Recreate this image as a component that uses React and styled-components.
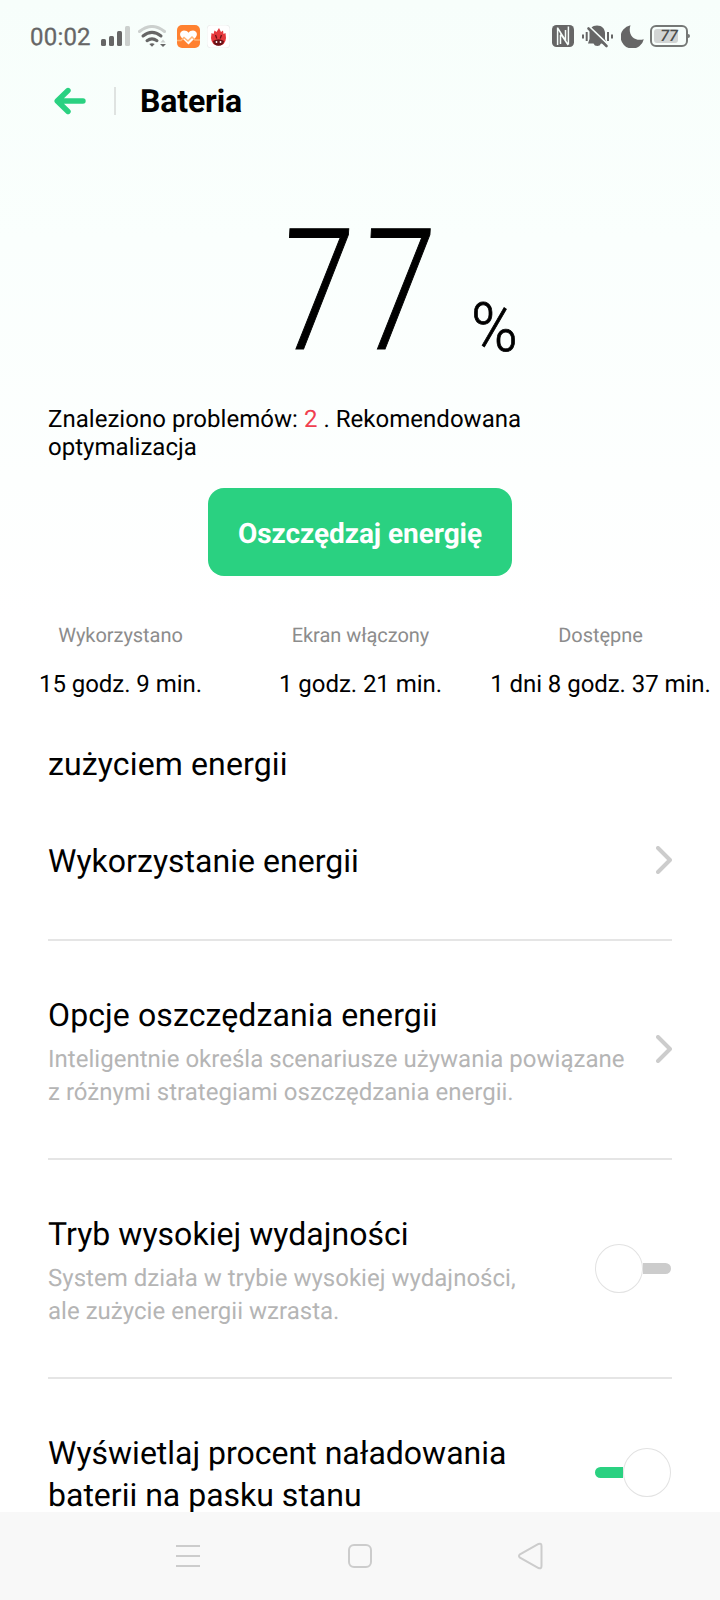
import React from "react";
import styled, { createGlobalStyle } from "styled-components";

const Global = createGlobalStyle`
  * { box-sizing: border-box; }
  html, body { margin: 0; padding: 0; background: #fff; }
  body {
    overflow: hidden;
    font-family: Roboto, "Noto Sans", sans-serif;
    color: #000;
    text-rendering: geometricPrecision;
  }
  svg { display: block; flex: none; }
`;

const Screen = styled.div`
  width: 720px;
  height: 1600px;
  display: flex;
  flex-direction: column;
  overflow: hidden;
  background: linear-gradient(#f7fefb 0, #fafffd 240px, #fdfffe 480px, #ffffff 620px);
`;

const StatusBar = styled.div`
  flex: none;
  height: 72px;
  padding: 0 30px;
  display: flex;
  align-items: center;
  justify-content: space-between;
  color: #666;
`;

const StatusGroup = styled.div`
  display: flex;
  align-items: center;
  gap: ${(p) => p.$gap}px;
`;

const Clock = styled.span`
  width: 63px;
  padding-top: 1px;
  font-size: 24px;
  line-height: 28px;
  letter-spacing: 0.2px;
  -webkit-text-stroke: 0.3px #666;
  white-space: nowrap;
`;

const AppIcons = styled.span`
  display: flex;
  gap: 7px;
  margin-left: 3px;
`;

const BatteryPill = styled.span`
  position: relative;
  width: 38px;
  height: 22px;
  margin: 0 2px 0 -2px;
  padding: 2px 7px 2px 2px;
  border: 2px solid #757876;
  border-radius: 6px;
  display: flex;
  &::before {
    content: "";
    width: 24px;
    height: 14px;
    border-radius: 3px;
    background: #d2d5d4;
  }
  &::after {
    content: "";
    position: absolute;
    right: -4px;
    top: 7px;
    width: 2px;
    height: 4px;
    border-radius: 0 2px 2px 0;
    background: #757876;
  }
`;

const BatteryValue = styled.b`
  position: absolute;
  inset: 0 0 0 0;
  text-align: center;
  font: italic 500 16px/18px Roboto, sans-serif;
  color: #4c4e4d;
`;

const Header = styled.header`
  flex: none;
  height: 58px;
  padding-left: 53px;
  display: flex;
  align-items: center;
`;

const HeaderRule = styled.span`
  width: 2px;
  height: 28px;
  margin: 0 24px 0 28px;
  background: #dfe3e1;
`;

const Title = styled.h1`
  margin: 0;
  font-size: 32px;
  line-height: 38px;
  font-weight: 700;
  letter-spacing: -0.15px;
`;

const Level = styled.div`
  flex: none;
  height: 270px;
  padding: 82px 0 0 277px;
  display: flex;
`;

const LevelNumber = styled.span`
  flex: none;
  width: 194px;
  height: 160px;
  font-size: 169px;
  line-height: 160px;
  font-weight: 300;
  letter-spacing: 15.5px;
  -webkit-text-stroke: 1.2px #000;
  transform: skewX(-3.3deg) scaleX(0.745);
  transform-origin: 0 100%;
`;

const LevelUnit = styled.span`
  font-size: 68px;
  line-height: 80px;
  font-weight: 300;
  margin-top: 76px;
  -webkit-text-stroke: 0.8px #000;
  transform: scaleX(0.93);
  transform-origin: 0 0;
`;

const Problems = styled.div`
  flex: none;
  height: 88px;
  padding: 5px 0 0 48px;
  font-size: 24px;
  line-height: 28px;
  letter-spacing: 0.03px;
`;

const ProblemLine = styled.div`
  display: flex;
  white-space: pre;
`;

const Count = styled.span`
  color: #f04050;
`;

const SaveButton = styled.button`
  flex: none;
  align-self: center;
  width: 304px;
  height: 88px;
  margin: 0;
  padding: 4px 0 0;
  border: 0;
  border-radius: 16px;
  background: #2ad181;
  color: #fff;
  font: 700 28px/34px Roboto, sans-serif;
  letter-spacing: -0.06px;
  text-rendering: inherit;
`;

const Stats = styled.div`
  flex: none;
  height: 156px;
  padding-top: 47px;
  display: grid;
  grid-template-columns: repeat(3, 240px);
`;

const Stat = styled.div`
  display: flex;
  flex-direction: column;
  align-items: center;
  padding-left: 1px;
  letter-spacing: -0.05px;
  white-space: nowrap;
`;

const StatLabel = styled.span`
  font-size: 20px;
  line-height: 24px;
  color: #8c8c8c;
`;

const StatValue = styled.span`
  margin-top: 22px;
  font-size: 24px;
  line-height: 30px;
`;

const SectionTitle = styled.h2`
  flex: none;
  height: 49px;
  margin: 0;
  padding: 13px 48px 0;
  font-size: 32px;
  line-height: 38px;
  font-weight: 400;
  letter-spacing: 0.13px;
`;

const List = styled.div`
  flex: 1;
  min-height: 0;
  overflow: hidden;
  padding: 0 48px;
`;

const Row = styled.div`
  height: ${(p) => p.$height}px;
  padding-bottom: ${(p) => p.$height % 2}px;
  display: flex;
  align-items: center;
  justify-content: space-between;
  border-bottom: 2px solid #e5e5e5;
`;

const RowText = styled.div`
  padding-top: ${(p) => p.$top}px;
`;

const RowTitle = styled.div`
  font-size: 32px;
  line-height: 42px;
  letter-spacing: ${(p) => p.$track || 0}px;
  white-space: pre-line;
`;

const RowNote = styled.div`
  margin-top: 7px;
  font-size: 24px;
  line-height: 33px;
  letter-spacing: 0.02px;
  color: #b5b5b5;
  white-space: pre-line;
`;

const Toggle = styled.span`
  width: 76px;
  height: 47px;
  margin: 1px 1px 0 0;
  display: flex;
  align-items: center;
  flex-direction: ${(p) => (p.$on ? "row-reverse" : "row")};
  &::before {
    content: "";
    width: 47px;
    height: 47px;
    border: 1px solid #e2e2e2;
    border-radius: 50%;
    background: #fff;
  }
  &::after {
    content: "";
    width: 29px;
    height: 11px;
    border-radius: ${(p) => (p.$on ? "6px 0 0 6px" : "0 6px 6px 0")};
    background: ${(p) => (p.$on ? "#2ad181" : "#ccc")};
  }
`;

const NavBar = styled.nav`
  flex: none;
  height: 88px;
  padding: 0 176px 0 175px;
  display: flex;
  align-items: center;
  justify-content: space-between;
  background: #f8f8f8;
`;

const Signal = () => (
  <svg width="29" height="20" viewBox="0 0 29 20" fill="#666">
    <rect x="0" y="13" width="5" height="7" rx="1.5" />
    <rect x="8" y="10" width="5" height="10" rx="1.5" />
    <rect x="16" y="5" width="5" height="15" rx="1.5" />
    <rect x="24" y="0" width="5" height="20" rx="1.5" fill="#ccd0ce" />
  </svg>
);

const Wifi = () => (
  <svg width="28" height="22" viewBox="0 0 28 22" fill="none" strokeWidth="3" strokeLinecap="round">
    <path d="M1.5 6.5Q14 -3.5 26.5 6.5" stroke="#ccd0ce" />
    <path d="M5 11Q14 3.8 23 11" stroke="#666" />
    <path d="M9 15.7Q14 12 19 15.7" stroke="#666" />
    <path d="M11.3 19Q14 17.5 16.7 19L14 21.7Z" fill="#666" />
    <path d="M22.5 17.5L25 14.5L27.5 17.5Z" fill="#ccd0ce" />
    <path d="M22 19H28L25 22Z" fill="#666" />
  </svg>
);

const HealthApp = () => (
  <svg width="23" height="23" viewBox="0 0 23 23">
    <rect width="23" height="23" rx="5" fill="#ff8130" />
    <path d="M11.5 19.5L4.2 12.2C1.8 9.4 3.6 5.5 7 5.5C9 5.5 10.5 6.3 11.5 7.8C12.5 6.3 14 5.5 16 5.5C19.5 5.5 21.2 9.4 18.8 12.2Z" fill="#fff" />
    <path d="M0 15.5H4L7 12.5L11 16L15 12L18 15H23" fill="none" stroke="#ffb476" strokeWidth="1.5" />
  </svg>
);

const BenchApp = () => (
  <svg width="23" height="23" viewBox="0 0 23 23">
    <rect x="0" y="0" width="23" height="23" rx="4" fill="#fff" stroke="#e6e9e8" strokeWidth=".7" />
    <path d="M4 13L4.5 8L6.5 9L7.5 5.5L9.5 7L12 3L14 7L16 5.5L16.5 9L18.5 8L19 13Q18.5 20.5 11.5 20.5Q4.5 20.5 4 13Z" fill="#e5383c" />
    <path d="M6 16Q11.5 12.500 17 16Q16.500 20.800 11.5 20.800Q6.500 20.800 6 16Z" fill="#6b1015" />
    <path d="M8.5 10L9.8 13.5M14.5 10L13.2 13.5" stroke="#6b1015" strokeWidth="1.3" />
    <circle cx="9.5" cy="17" r=".9" fill="#fff" />
    <circle cx="13.5" cy="17" r=".9" fill="#fff" />
  </svg>
);

const Nfc = () => (
  <svg width="22" height="22" viewBox="0 0 22 22">
    <rect width="22" height="22" rx="4.5" fill="#666" />
    <path d="M5.600 20V2.500M5.600 3L13.500 15.500V5M8.500 10V19M8.500 8.500L16.200 20M16.400 1.500V19.500" fill="none" stroke="#f7fefb" strokeWidth="1.500" />
  </svg>
);

const Muted = () => (
  <svg width="31" height="23" viewBox="0 0 31 23">
    <path d="M15 0.5C20 .5 23 4 23 8V14L25 18.5H19A4 4 0 0 1 11.5 18.5H6L7.5 14V8C7.5 4 10 .5 15 .5Z" fill="#666" />
    <path d="M6 0.5L27 20.5" stroke="#f7fefb" strokeWidth="2" />
    <path d="M6.5 3.5L24.5 21" stroke="#666" strokeWidth="2.6" strokeLinecap="round" />
    <path d="M1 9.5V13.5M4.7 7V16M26 7V16M30 9.5V13.5" stroke="#666" strokeWidth="2" />
  </svg>
);

const Moon = () => (
  <svg width="23" height="23" viewBox="0 0 23 23">
    <path d="M9.5 .3C6.5 9 12.5 17 22.8 14.3A11.7 11.7 0 1 1 9.5 .3Z" fill="#666" />
  </svg>
);

const Back = () => (
  <svg width="33" height="28" viewBox="0 0 33 28" fill="none" stroke="#2ad181" strokeWidth="5.4" strokeLinecap="round" strokeLinejoin="round">
    <path d="M15 3.5L4.2 14L15 24.5M5 14H30" />
  </svg>
);

const Chevron = () => (
  <svg width="16" height="28" viewBox="0 0 16 28" fill="none" stroke="#ccc" strokeWidth="4" strokeLinecap="round" strokeLinejoin="round">
    <path d="M2 2L14 14L2 26" />
  </svg>
);

export default function App() {
  return (
    <Screen>
      <Global />
      <StatusBar>
        <StatusGroup $gap={8}>
          <Clock>00:02</Clock>
          <Signal />
          <Wifi />
          <AppIcons>
            <HealthApp />
            <BenchApp />
          </AppIcons>
        </StatusGroup>
        <StatusGroup $gap={8}>
          <Nfc />
          <Muted />
          <Moon />
          <BatteryPill>
            <BatteryValue>77</BatteryValue>
          </BatteryPill>
        </StatusGroup>
      </StatusBar>
      <Header>
        <Back />
        <HeaderRule />
        <Title>Bateria</Title>
      </Header>
      <Level>
        <LevelNumber>77</LevelNumber>
        <LevelUnit>%</LevelUnit>
      </Level>
      <Problems>
        <ProblemLine>
          <span>{"Znaleziono problemów: "}</span>
          <Count>2</Count>
          <span>{" . Rekomendowana"}</span>
        </ProblemLine>
        <ProblemLine>optymalizacja</ProblemLine>
      </Problems>
      <SaveButton>Oszczędzaj energię</SaveButton>
      <Stats>
        <Stat>
          <StatLabel>Wykorzystano</StatLabel>
          <StatValue>15 godz. 9 min.</StatValue>
        </Stat>
        <Stat>
          <StatLabel>Ekran włączony</StatLabel>
          <StatValue>1 godz. 21 min.</StatValue>
        </Stat>
        <Stat>
          <StatLabel>Dostępne</StatLabel>
          <StatValue>1 dni 8 godz. 37 min.</StatValue>
        </Stat>
      </Stats>
      <SectionTitle>zużyciem energii</SectionTitle>
      <List>
        <Row $height={160}>
          <RowText $top={2}>
            <RowTitle $track={0.03}>Wykorzystanie energii</RowTitle>
          </RowText>
          <Chevron />
        </Row>
        <Row $height={219}>
          <RowText $top={4}>
            <RowTitle $track={0.11}>Opcje oszczędzania energii</RowTitle>
            <RowNote>{"Inteligentnie określa scenariusze używania powiązane\nz różnymi strategiami oszczędzania energii."}</RowNote>
          </RowText>
          <Chevron />
        </Row>
        <Row $height={219}>
          <RowText $top={4}>
            <RowTitle $track={0.04}>Tryb wysokiej wydajności</RowTitle>
            <RowNote>{"System działa w trybie wysokiej wydajności,\nale zużycie energii wzrasta."}</RowNote>
          </RowText>
          <Toggle />
        </Row>
        <Row $height={189}>
          <RowText $top={3}>
            <RowTitle>{"Wyświetlaj procent naładowania\nbaterii na pasku stanu"}</RowTitle>
          </RowText>
          <Toggle $on />
        </Row>
      </List>
      <NavBar>
        <svg width="26" height="26" viewBox="0 0 26 26" stroke="#ccc" strokeWidth="2">
          <path d="M1 3H25M1 13H25M1 23H25" />
        </svg>
        <svg width="26" height="26" viewBox="0 0 26 26" fill="none" stroke="#ccc" strokeWidth="2">
          <rect x="2" y="2" width="22" height="22" rx="5" />
        </svg>
        <svg width="26" height="28" viewBox="0 0 26 28" fill="none" stroke="#ccc" strokeWidth="2">
          <path d="M2 12.3Q0 14 2 15.7L20.5 26Q23.5 27.2 23.5 24V4Q23.5 .8 20.5 2Z" />
        </svg>
      </NavBar>
    </Screen>
  );
}
